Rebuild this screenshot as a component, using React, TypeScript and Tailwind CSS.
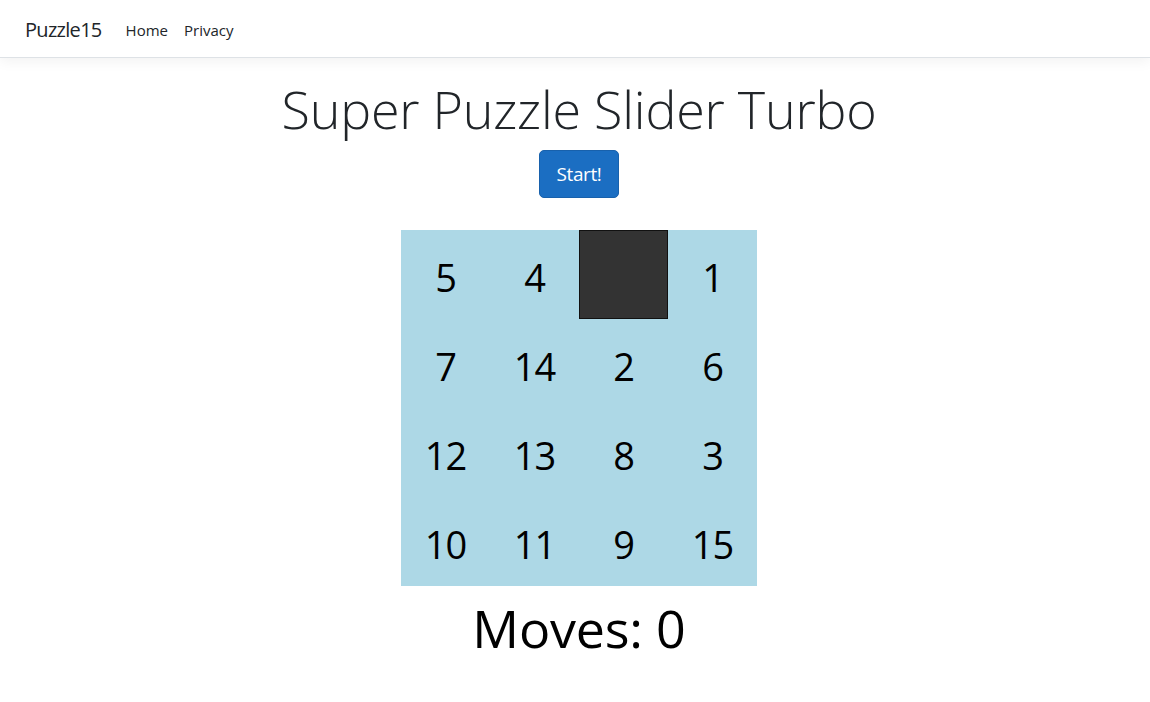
import React from "react";

const tiles: (number | null)[] = [5, 4, null, 1, 7, 14, 2, 6, 12, 13, 8, 3, 10, 11, 9, 15];

export default function App() {
  return (
    <div className="min-h-[702px] bg-white text-[#212529]" style={{ fontFamily: '"Open Sans", "Noto Sans", sans-serif' }}>
      <nav className="h-[58px] bg-white border-b border-[#dee2e6] shadow-[0_4px_12px_rgba(0,0,0,0.05)] flex items-center pl-[25px] pt-[3px]">
        <span className="text-[20px] text-[#212529] mr-[16px] tracking-[-0.7px]">Puzzle15</span>
        <a className="px-[8px] text-[15px] text-[#212529] tracking-[0px]">Home</a>
        <a className="px-[8px] text-[15px] text-[#212529] tracking-[0px]">Privacy</a>
      </nav>
      <main className="pl-[8px] pt-[18px] flex flex-col items-center">
        <h1 className="text-[52px] leading-[66px] font-light tracking-[-0.2px] mb-[8px] mt-0">Super Puzzle Slider Turbo</h1>
        <button className="h-[48px] w-[80px] bg-[#1b6ec2] border border-[#1861ac] rounded-[5px] text-white text-[19px] tracking-[-0.4px]">Start!</button>
        <div className="mt-[32px] grid grid-cols-4 w-[356px] bg-[#add8e6]">
          {tiles.map((t, i) =>
            t === null ? (
              <div key={i} className="h-[89px] w-[89px] bg-[#333333] border border-[#111111]" />
            ) : (
              <div key={i} className="h-[89px] w-[89px] flex items-center justify-center pt-[6px] text-[38px] text-black tracking-[-1px]">
                {t}
              </div>
            )
          )}
        </div>
        <div className="mt-[9px] text-[52px] leading-[66px] text-black tracking-[-0.2px]">Moves: 0</div>
      </main>
    </div>
  );
}
